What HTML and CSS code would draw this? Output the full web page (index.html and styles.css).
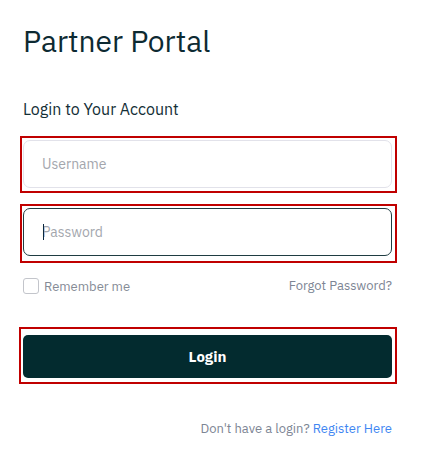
FILE: index.html
```html
<!DOCTYPE html>
<html>
<head>
<meta charset="utf-8">
<link rel="stylesheet" href="styles.css">
</head>
<body>
<main class="page">
  <h1 class="title">Partner Portal</h1>
  <p class="subtitle">Login to Your Account</p>
  <form class="form">
    <div class="frame frame-user">
      <input class="field" type="text" placeholder="Username">
    </div>
    <div class="frame frame-pass">
      <input class="field field-focus" type="password" placeholder="Password" autofocus>
      <span class="caret"></span>
    </div>
    <div class="options">
      <label class="remember"><span class="box"></span>Remember me</label>
      <a class="forgot">Forgot Password?</a>
    </div>
    <div class="frame frame-btn">
      <button class="btn" type="button">Login</button>
    </div>
  </form>
  <p class="register">Don't have a login? <a class="reg-link">Register Here</a></p>
</main>
</body>
</html>
```
FILE: styles.css
```css
* { box-sizing: border-box; }
html, body { margin: 0; padding: 0; background: #fff; }
body {
  font-family: "IBM Plex Sans", "Liberation Sans", Arial, sans-serif;
  color: #0f2b33;
}
.page {
  width: 437px;
  padding: 23px 0 0 23px;
}
.title {
  margin: 0;
  font-size: 30px;
  line-height: 36px;
  font-weight: 400;
  color: #0d2a32;
}
.subtitle {
  margin: 40px 0 0 0;
  font-size: 16px;
  line-height: 21px;
  color: #132e36;
}
.form {
  margin-top: 16px;
  width: 377px;
  margin-left: -3px;
  display: flex;
  flex-direction: column;
  align-items: flex-start;
}
.frame {
  border: 2px solid #c00000;
  position: relative;
  width: 377px;
}
.frame-user { padding: 2px 3px 3px 1px; }
.frame-pass { padding: 2px 3px 5px 1px; margin-top: 11px; }
.field {
  display: block;
  width: 369px;
  height: 48px;
  border: 1px solid #e2e2ea;
  border-radius: 7px;
  padding: 0 0 0 18px;
  font-family: inherit;
  font-size: 14px;
  color: #333;
  outline: none;
  background: #fff;
}
.field::placeholder { color: #a3a6ad; }
.field-focus { border-color: #1f3d42; }
.caret {
  position: absolute;
  left: 21px;
  top: 18px;
  width: 1px;
  height: 16px;
  background: #0b2740;
}
.options {
  margin-top: 14px;
  padding-left: 3px;
  width: 372px;
  display: flex;
  justify-content: space-between;
  align-items: center;
  height: 18px;
}
.remember {
  display: flex;
  align-items: center;
  font-size: 13px;
  color: #858b96;
}
.box {
  width: 16px;
  height: 16px;
  border: 1px solid #c3c5cb;
  border-radius: 3px;
  margin-right: 5px;
  background: #fff;
}
.forgot {
  font-size: 13px;
  color: #7d8594;
  margin-top: -2px;
}
.frame-btn {
  margin-top: 32px;
  padding: 6px 5px 4px 2px;
  margin-left: -1px;
  width: 378px;
}
.btn {
  display: block;
  width: 369px;
  height: 43px;
  border: none;
  border-radius: 5px;
  background: #032b2f;
  color: #fff;
  font-family: inherit;
  font-size: 15px;
  font-weight: 700;
}
.register {
  margin: 37px 0 0 0;
  width: 369px;
  text-align: right;
  font-size: 13px;
  line-height: 16px;
  color: #7d8594;
}
.reg-link { color: #3f86f2; }
```
